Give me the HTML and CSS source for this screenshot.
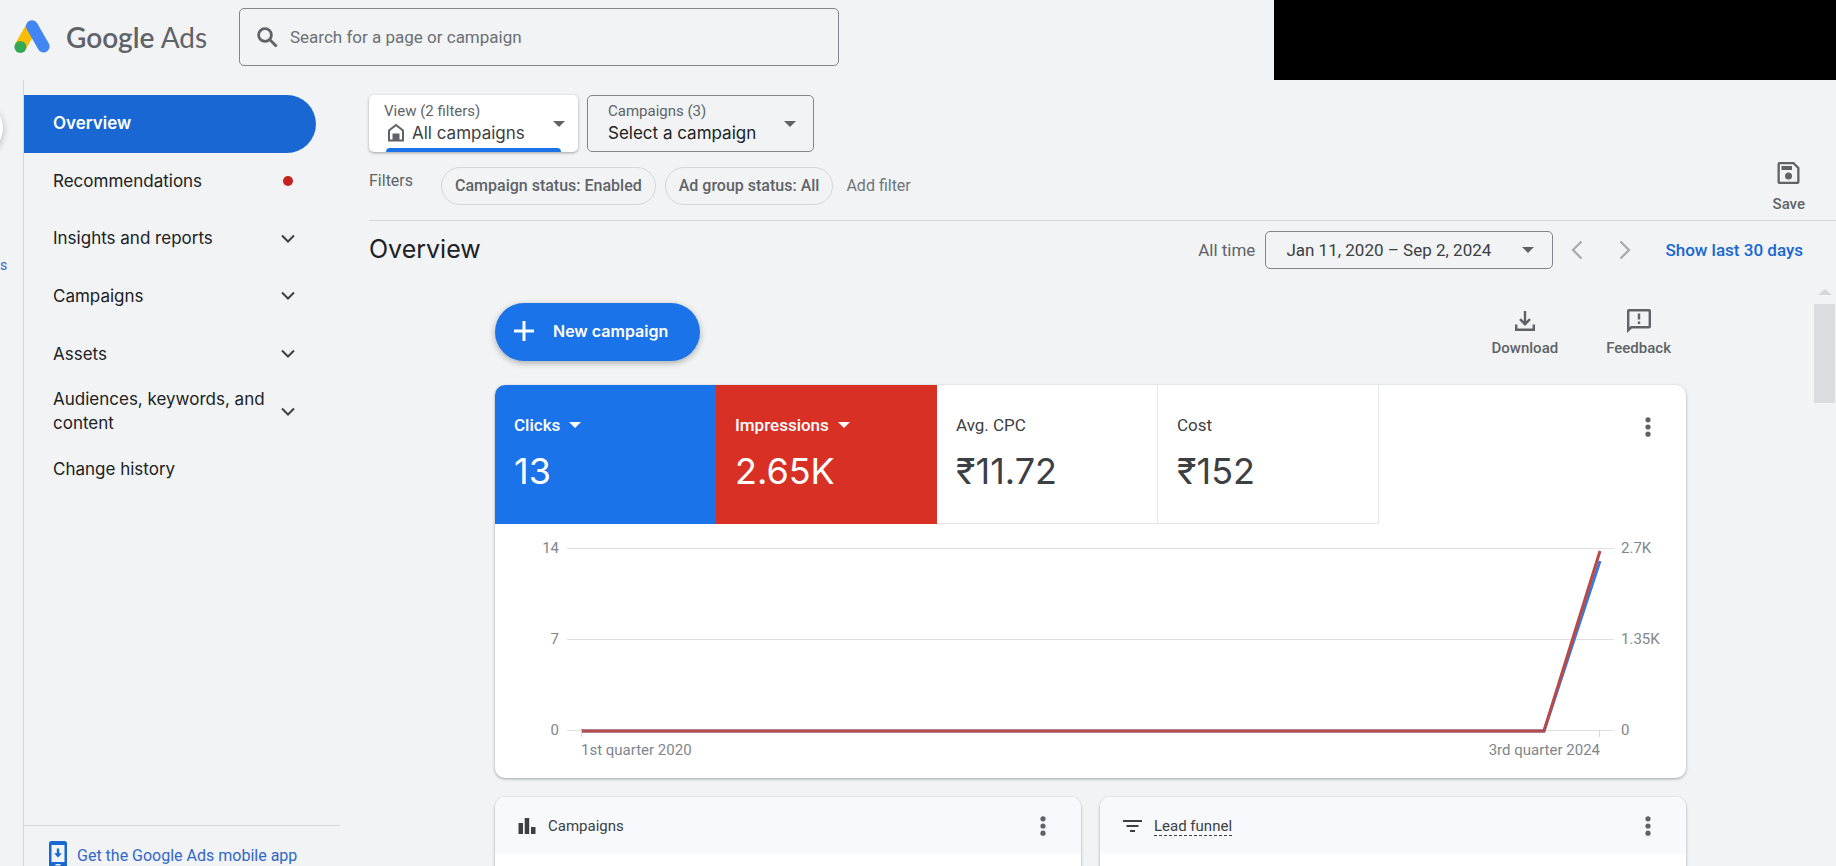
FILE: index.html
```html
<!DOCTYPE html>
<html lang="en">
<head>
<meta charset="utf-8">
<title>Overview - Google Ads</title>
<link rel="stylesheet" href="styles.css">
</head>
<body>
<div class="app">
  <header class="topbar">
    <a class="brand" href="#">
      <svg class="brand-mark" viewBox="0 0 36 34" aria-hidden="true">
        <path d="M6.5 26.5 18 6.5" stroke="#fbbc04" stroke-width="12"/>
        <path d="M18 6.3 29.6 26.5" stroke="#4285f4" stroke-width="12" stroke-linecap="round"/>
        <circle cx="6.4" cy="27" r="6" fill="#34a853"/>
      </svg>
      <span class="brand-name"><span class="brand-google">Google</span> Ads</span>
    </a>
    <label class="search">
      <svg class="search-icon" viewBox="0 0 21 21" aria-hidden="true"><circle cx="8" cy="8" r="6.4"/><path d="m12.6 12.6 7 7"/></svg>
      <input type="search" placeholder="Search for a page or campaign" aria-label="Search for a page or campaign">
    </label>
    <div class="account"></div>
  </header>

  <div class="body">
    <aside class="rail">
      <span class="rail-fab"></span>
      <a class="rail-link" href="#">s</a>
    </aside>

    <aside class="sidebar">
      <nav class="nav">
        <a class="nav-item nav-item-active" href="#">Overview</a>
        <a class="nav-item" href="#"><span>Recommendations</span><i class="dot"></i></a>
        <a class="nav-item" href="#"><span>Insights and reports</span><svg class="chev" viewBox="0 0 14 9" aria-hidden="true"><path d="m1 1.500 6 6 6-6"/></svg></a>
        <a class="nav-item" href="#"><span>Campaigns</span><svg class="chev" viewBox="0 0 14 9" aria-hidden="true"><path d="m1 1.500 6 6 6-6"/></svg></a>
        <a class="nav-item" href="#"><span>Assets</span><svg class="chev" viewBox="0 0 14 9" aria-hidden="true"><path d="m1 1.500 6 6 6-6"/></svg></a>
        <a class="nav-item" href="#"><span>Audiences, keywords, and content</span><svg class="chev" viewBox="0 0 14 9" aria-hidden="true"><path d="m1 1.500 6 6 6-6"/></svg></a>
        <a class="nav-item" href="#">Change history</a>
      </nav>
      <a class="mobile-app" href="#">
        <svg class="phone" viewBox="0 0 18 28" aria-hidden="true"><path fill-rule="evenodd" d="M2.500 0h13A2.500 2.500 0 0 1 18 2.500v23a2.500 2.500 0 0 1-2.500 2.500h-13A2.500 2.500 0 0 1 0 25.500v-23A2.500 2.500 0 0 1 2.500 0ZM2.500 4v17h13V4Zm4 19v1.500h5V23Z"/><path d="M7.800 7.500h2.400v4.700h2.600L9 16.500l-3.800-4.300h2.600Z"/></svg>
        <span>Get the Google Ads mobile app</span>
      </a>
    </aside>

    <main class="main">
      <div class="scope">
        <button class="picker picker-view" type="button">
          <span class="picker-text">
            <span class="picker-label">View (2 filters)</span>
            <span class="picker-value"><svg class="home" viewBox="0 0 18 19" aria-hidden="true"><path class="home-line" d="M2 17.500V7.500L9 2l7 5.500v10Z"/><path class="home-door" d="M5.500 10.500h7V18h-7Z"/></svg>All campaigns</span>
          </span>
          <i class="caret"></i>
        </button>
        <button class="picker picker-campaign" type="button">
          <span class="picker-text">
            <span class="picker-label">Campaigns (3)</span>
            <span class="picker-value">Select a campaign</span>
          </span>
          <i class="caret"></i>
        </button>
      </div>

      <div class="filters">
        <span class="filters-label">Filters</span>
        <button class="chip" type="button">Campaign status: Enabled</button>
        <button class="chip" type="button">Ad group status: All</button>
        <button class="add-filter" type="button">Add filter</button>
        <button class="tool save" type="button">
          <svg class="save-icon" viewBox="0 0 22 22" aria-hidden="true"><path fill-rule="evenodd" d="M2 0h14.500L22 5.500V20a2 2 0 0 1-2 2H2a2 2 0 0 1-2-2V2a2 2 0 0 1 2-2Zm.3 2.300v17.400h17.400V6.400l-4.100-4.100Z"/><path d="M4 4h10.500v4H4Z"/><circle cx="11" cy="14" r="3.500"/></svg>
          <span>Save</span>
        </button>
      </div>

      <div class="titlebar">
        <h1>Overview</h1>
        <span class="range-label">All time</span>
        <button class="range" type="button"><span>Jan 11, 2020 – Sep 2, 2024</span><i class="caret"></i></button>
        <button class="step" type="button" aria-label="Previous period"><svg viewBox="0 0 12 20" aria-hidden="true"><path d="m10.500 1.500-8.500 8.500 8.500 8.500"/></svg></button>
        <button class="step" type="button" aria-label="Next period"><svg viewBox="0 0 12 20" aria-hidden="true"><path d="m1.500 1.500 8.500 8.500-8.500 8.500"/></svg></button>
        <a class="last30" href="#">Show last 30 days</a>
      </div>

      <div class="scroller">
        <div class="content">
          <div class="actions">
            <button class="new" type="button"><svg viewBox="0 0 20 20" aria-hidden="true"><path d="M10 0v20M0 10h20"/></svg><span>New campaign</span></button>
            <button class="tool" type="button">
              <svg class="dl-icon" viewBox="0 0 20 20" aria-hidden="true"><path d="M10 0v13M5 8.200l5 5 5-5M1.200 13.500v5.300h17.600v-5.300"/></svg>
              <span>Download</span>
            </button>
            <button class="tool" type="button">
              <svg class="fb-icon" viewBox="0 0 24 24" aria-hidden="true"><path fill-rule="evenodd" d="M2 0h20a2 2 0 0 1 2 2v15.500a2 2 0 0 1-2 2H4.800L0 24V2a2 2 0 0 1 2-2Zm.4 2.400v15.800L3.800 17h17.800V2.400Z"/><path d="M10.800 4.500h2.400v6h-2.400Zm0 8h2.400v2.400h-2.400Z"/></svg>
              <span>Feedback</span>
            </button>
          </div>

          <section class="card">
            <div class="metrics">
              <button class="metric metric-blue" type="button"><span class="metric-label">Clicks<i class="caret caret-white"></i></span><span class="metric-value">13</span></button>
              <button class="metric metric-red" type="button"><span class="metric-label">Impressions<i class="caret caret-white"></i></span><span class="metric-value">2.65K</span></button>
              <button class="metric" type="button"><span class="metric-label">Avg. CPC</span><span class="metric-value">₹11.72</span></button>
              <button class="metric" type="button"><span class="metric-label">Cost</span><span class="metric-value">₹152</span></button>
              <button class="kebab kebab-top" type="button" aria-label="More options"><svg viewBox="0 0 6 20" aria-hidden="true"><circle cx="3" cy="2.800" r="2.600"/><circle cx="3" cy="10" r="2.600"/><circle cx="3" cy="17.200" r="2.600"/></svg></button>
            </div>
            <div class="chart">
              <div class="axis axis-left"><span>14</span><span>7</span><span>0</span></div>
              <div class="plot">
                <svg class="series" viewBox="0 0 1019 182" preserveAspectRatio="none" role="img" aria-label="Clicks and impressions by quarter">
                  <polyline class="line-clicks" points="0,182 963,182 1019,13"/>
                  <polyline class="line-impressions" points="0,182 963,182 1019,3"/>
                </svg>
              </div>
              <div class="axis axis-right"><span>2.7K</span><span>1.35K</span><span>0</span></div>
              <div class="quarters"><span>1st quarter 2020</span><span>3rd quarter 2024</span></div>
            </div>
          </section>

          <div class="panels">
            <section class="card panel">
              <header class="panel-head">
                <svg class="bars" viewBox="0 0 17 16" aria-hidden="true"><path d="M0 5h4.500v11H0ZM6.200 0h4.500v16H6.200ZM12.500 9H17v7h-4.500Z"/></svg>
                <h2>Campaigns</h2>
                <button class="kebab" type="button" aria-label="More options"><svg viewBox="0 0 6 20" aria-hidden="true"><circle cx="3" cy="2.800" r="2.600"/><circle cx="3" cy="10" r="2.600"/><circle cx="3" cy="17.200" r="2.600"/></svg></button>
              </header>
            </section>
            <section class="card panel">
              <header class="panel-head">
                <svg class="funnel" viewBox="0 0 19 12" aria-hidden="true"><path d="M0 1h19M3.500 6h12M7 11h5"/></svg>
                <h2 class="dashed">Lead funnel</h2>
                <button class="kebab" type="button" aria-label="More options"><svg viewBox="0 0 6 20" aria-hidden="true"><circle cx="3" cy="2.800" r="2.600"/><circle cx="3" cy="10" r="2.600"/><circle cx="3" cy="17.200" r="2.600"/></svg></button>
              </header>
            </section>
          </div>
        </div>
        <div class="scrollbar"><i class="scroll-up"></i><i class="scroll-thumb"></i></div>
      </div>
    </main>
  </div>
</div>
</body>
</html>
```
FILE: styles.css
```css
* { box-sizing: border-box; }
body { margin: 0; background: #f1f3f4; color: #202124; font: 16px/24px Roboto, "Liberation Sans", sans-serif; }
button { border: 0; padding: 0; margin: 0; background: none; color: inherit; font: inherit; text-align: left; cursor: pointer; }
a { color: inherit; text-decoration: none; }
h1, h2 { margin: 0; font-weight: 400; }
svg { display: block; flex: none; }

.app { height: 100vh; display: flex; flex-direction: column; overflow: hidden; }

.topbar { flex: none; height: 80px; display: flex; align-items: flex-start; }
.brand { display: flex; align-items: center; gap: 16px; width: 239px; height: 74px; padding-left: 14px; }
.brand-mark { width: 36px; height: 34px; fill: none; }
.brand-name { font: 400 28px/32px Lato, sans-serif; color: #5f6368; white-space: nowrap; }
.brand-google { font-weight: 600; }
.search { display: flex; align-items: center; width: 600px; height: 58px; margin-top: 8px; padding-left: 17px; gap: 12px; border: 1px solid #80868b; border-radius: 5px; }
.search-icon { width: 21px; height: 21px; fill: none; stroke: #5f6368; stroke-width: 2.800; }
.search input { flex: 1; min-width: 0; border: 0; outline: 0; padding: 0; background: none; font: 17px/24px Roboto, sans-serif; color: #202124; }
.search input::placeholder { color: #6b7075; opacity: 1; }
.account { align-self: stretch; width: 562px; margin-left: auto; background: #000; }

.body { flex: 1; min-height: 0; display: flex; }
.rail { position: relative; flex: none; width: 24px; border-right: 1px solid #d5d7da; overflow: hidden; }
.rail-fab { position: absolute; left: -57px; top: 20px; width: 60px; height: 56px; border-radius: 28px; background: #fff; box-shadow: 0 2px 6px rgba(60, 64, 67, .35); }
.rail-link { position: absolute; left: 0; top: 176px; font-size: 14px; line-height: 18px; color: #3367c8; }

.sidebar { flex: none; width: 316px; display: flex; flex-direction: column; }
.nav { display: grid; grid-template-rows: repeat(7, 1fr); height: 403px; margin-top: 15px; }
.nav-item { display: flex; align-items: center; justify-content: space-between; margin-right: 24px; padding: 0 21px 1px 29px; font: 400 17px/24px Inter, sans-serif; color: #202124; }
.nav-item span { max-width: 216px; }
.nav-item-active { background: #1967d2; color: #fff; font-weight: 600; border-radius: 0 29px 29px 0; }
.dot { width: 10px; height: 10px; margin-right: 2px; border-radius: 50%; background: #c5221f; }
.chev { width: 14px; height: 9px; fill: none; stroke: #3c4043; stroke-width: 2; }
.mobile-app { display: flex; align-items: flex-start; gap: 10px; height: 41px; margin-top: auto; padding: 15px 0 0 25px; border-top: 1px solid #d5d7da; color: #3367c8; font-size: 16px; line-height: 29px; overflow: hidden; }
.phone { width: 18px; height: 28px; fill: #1967d2; }

.main { flex: 1; min-width: 0; display: flex; flex-direction: column; padding-left: 29px; }
.scope { display: flex; gap: 9px; padding-top: 15px; }
.picker { display: flex; align-items: center; justify-content: space-between; height: 57px; border-radius: 5px; }
.picker-view { position: relative; width: 209px; padding: 0 13px 0 15px; background: #fff; box-shadow: 0 1px 3px rgba(60, 64, 67, .45); }
.picker-view::after { content: ""; position: absolute; left: 17px; right: 17px; bottom: 0; height: 4px; border-radius: 4px 4px 0 0; background: #1a73e8; }
.picker-campaign { width: 227px; padding: 0 17px 0 20px; border: 1px solid #80868b; }
.picker-text { display: flex; flex-direction: column; padding-bottom: 2px; }
.picker-label { font-size: 15px; line-height: 20px; color: #5f6368; }
.picker-value { display: flex; align-items: center; gap: 7px; font: 400 17px/24px Inter, sans-serif; }
.picker-view .picker-value { padding-left: 3px; color: #3c4043; }
.home { width: 18px; height: 19px; }
.home-line { fill: none; stroke: #5f6368; stroke-width: 2; }
.home-door { fill: #5f6368; }
.caret { flex: none; width: 0; height: 0; border: solid transparent; border-width: 6px 6px 0; border-top-color: #5f6368; }

.filters { display: flex; height: 69px; padding-top: 15px; align-items: flex-start; border-bottom: 1px solid #d5d7da; color: #5f6368; }
.filters-label { width: 72px; padding-top: 2px; }
.chip { height: 38px; margin-right: 9px; padding: 0 13px; border: 1px solid #d5d7da; border-radius: 19px; font-weight: 500; }
.add-filter { height: 38px; margin-left: 4px; color: #70757a; }
.tool { display: flex; flex-direction: column; align-items: center; gap: 6px; color: #5f6368; font: 500 15px/18px Roboto, sans-serif; }
.tool svg { fill: #5f6368; }
.save { margin-left: auto; margin-right: 31px; margin-top: -5px; gap: 11px; }
.save-icon { width: 23px; height: 22px; }

.titlebar { flex: none; display: flex; align-items: center; height: 58px; padding-right: 33px; }
h1 { flex: 1; padding-bottom: 2px; font: 400 25px/32px Inter, sans-serif; }
.range-label { margin-right: 10px; font-size: 17px; color: #5f6368; }
.range { display: flex; align-items: center; justify-content: space-between; width: 288px; height: 38px; padding: 0 18px 0 20px; border: 1px solid #80868b; border-radius: 5px; font-size: 17px; color: #3c4043; }
.step { width: 48px; height: 38px; display: flex; align-items: center; justify-content: center; }
.step svg { width: 12px; height: 20px; fill: none; stroke: #a8abae; stroke-width: 2.200; }
.last30 { margin-left: 16px; font-size: 17px; font-weight: 500; color: #1967d2; }

.scroller { flex: 1; min-height: 0; display: flex; overflow: hidden; }
.content { flex: 1; max-width: 1191px; margin: 0 auto; padding-top: 24px; }
.scrollbar { flex: none; width: 24px; padding: 10px 1px 0 2px; display: flex; flex-direction: column; align-items: center; gap: 9px; }
.scroll-up { border: solid transparent; border-width: 0 7px 6px; border-bottom-color: #d5d7da; }
.scroll-thumb { width: 100%; height: 99px; background: #dadce0; }

.actions { display: flex; gap: 48px; align-items: flex-start; height: 82px; padding-right: 15px; }
.new { display: flex; align-items: center; gap: 19px; width: 205px; height: 58px; margin-right: auto; padding: 0 0 2px 19px; border-radius: 29px; background: #1a73e8; color: #fff; font: 600 16px/24px Inter, sans-serif; box-shadow: 0 2px 6px rgba(60, 64, 67, .4); }
.new svg { width: 20px; height: 20px; stroke: #fff; stroke-width: 3; }
.actions .tool { margin-top: 6px; }
.tool .dl-icon { width: 20px; height: 20px; margin: 2px; fill: none; stroke: #5f6368; stroke-width: 2.400; }
.fb-icon { width: 24px; height: 24px; }

.card { background: #fff; border-radius: 10px; box-shadow: 0 1px 3px rgba(60, 64, 67, .45); overflow: hidden; }
.metrics { display: grid; grid-template-columns: repeat(4, 221px) 1fr; height: 139px; }
.metric { display: flex; flex-direction: column; padding: 28px 19px 0; gap: 14px; border: solid #e4e6e8; border-width: 0 1px 1px 0; color: #3c4043; }
.metric-blue { background: #1a73e8; border-color: #1a73e8; color: #fff; }
.metric-red { background: #d93025; border-color: #d93025; color: #fff; }
.metric-label { display: flex; align-items: center; gap: 9px; font-size: 17px; line-height: 24px; }
.metric-blue .metric-label, .metric-red .metric-label { font-weight: 500; }
.caret-white { border-top-color: #fff; }
.metric-value { font: 400 36px/40px Inter, Roboto, sans-serif; }
.kebab { flex: none; width: 22px; height: 24px; display: flex; align-items: center; justify-content: center; }
.kebab svg { width: 6px; height: 20px; fill: #5f6368; }
.kebab-top { justify-self: end; margin: 30px 27px 0 0; }

.chart { display: grid; grid-template-columns: 72px 1fr 72px; align-content: start; padding: 24px 0 0; height: 254px; font-size: 15px; line-height: 16px; color: #80868b; }
.axis { display: flex; flex-direction: column; justify-content: space-between; height: 198px; margin-top: -8px; }
.axis-left { align-items: flex-end; padding-right: 8px; }
.axis-right { padding-left: 7px; }
.plot { height: 183px; padding: 0 14px; background: linear-gradient(#e0e0e0, #e0e0e0) 0 0 / 100% 1px no-repeat, linear-gradient(#e0e0e0, #e0e0e0) 0 91px / 100% 1px no-repeat, linear-gradient(#e0e0e0, #e0e0e0) 0 182px / 100% 1px no-repeat; }
.series { width: 100%; height: 183px; overflow: visible; fill: none; stroke-width: 3; }
.series polyline { vector-effect: non-scaling-stroke; }
.line-clicks { stroke: #3b78d8; }
.line-impressions { stroke: #b94a48; }
.quarters { grid-column: 2; display: flex; justify-content: space-between; align-self: start; margin: 0 14px; padding-top: 4px; }
.quarters span { position: relative; }
.quarters span::before { content: ""; position: absolute; top: -12px; left: 0; width: 1px; height: 7px; background: #dcd5d3; }
.quarters span:last-child::before { left: auto; right: 0; }

.panels { display: grid; grid-template-columns: 1fr 1fr; gap: 19px; margin-top: 19px; }
.panel { height: 320px; }
.panel-head { display: flex; align-items: center; gap: 12px; height: 57px; padding: 0 27px 0 23px; background: #f8f9fc; }
.panel-head .kebab { margin-left: auto; }
.panel h2 { font-size: 15px; line-height: 18px; color: #3c4043; }
.bars { width: 18px; height: 16px; fill: #3c4043; }
.funnel { width: 19px; height: 12px; fill: none; stroke: #3c4043; stroke-width: 2; }
.panel h2.dashed { padding-top: 2px; border-bottom: 1px dashed #3c4043; }
```
